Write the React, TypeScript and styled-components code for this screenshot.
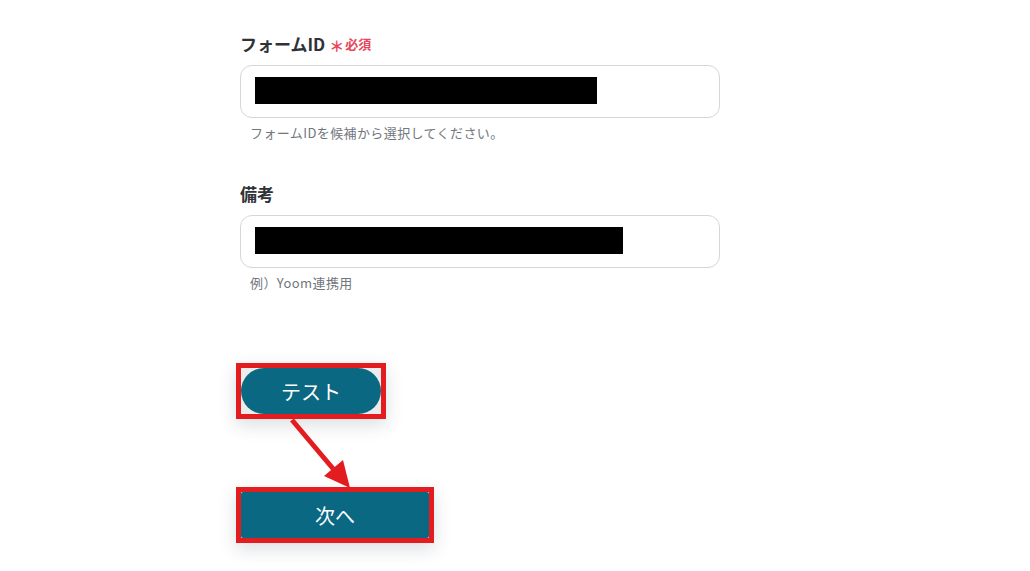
import * as React from 'react';
import styled, { createGlobalStyle } from 'styled-components';

const GlobalStyle = createGlobalStyle`
  html, body {
    margin: 0;
    padding: 0;
    background: #ffffff;
  }
  body {
    font-family: "Noto Sans CJK JP", "Noto Sans", sans-serif;
    color: #333333;
  }
`;

const Page = styled.div`
  width: 1030px;
  height: 571px;
  overflow: hidden;
  padding: 31px 0 0 240px;
  box-sizing: border-box;
`;

const Form = styled.div`
  width: 480px;
  display: flex;
  flex-direction: column;
`;

const Field = styled.div<{ $gap?: number }>`
  display: flex;
  flex-direction: column;
  margin-top: ${p => p.$gap ?? 0}px;
`;

const Label = styled.div`
  display: flex;
  align-items: center;
  height: 24px;
  font-size: 17px;
  font-weight: 700;
  color: #2f3237;
`;

const Asterisk = styled.span`
  margin-left: 4px;
  font-size: 15px;
  font-weight: 700;
  color: #e8455b;
  position: relative;
  top: 2px;
`;

const Required = styled.span`
  margin-left: 1px;
  font-size: 13px;
  font-weight: 700;
  color: #e8455b;
`;

const InputBox = styled.div`
  margin-top: 10px;
  height: 53px;
  box-sizing: border-box;
  border: 1px solid #d3d6db;
  border-radius: 12px;
  padding: 11px 14px;
  background: #fff;
`;

const Redacted = styled.div<{ $w: number }>`
  width: ${p => p.$w}px;
  height: 27px;
  background: #000;
`;

const Help = styled.div`
  margin-top: 6px;
  padding-left: 10px;
  font-size: 13px;
  letter-spacing: 0.4px;
  line-height: 18px;
  color: #72767d;
`;

const Actions = styled.div`
  position: relative;
  margin-top: 71px;
  margin-left: -4px;
  display: flex;
  flex-direction: column;
  align-items: flex-start;
  gap: 68px;
`;

const Highlight = styled.div`
  border: 5px solid #e31d1f;
  box-shadow: 0 6px 18px rgba(40, 50, 70, 0.16);
  background: #ececec;
  line-height: 0;
`;

const Button = styled.button<{ $w: number; $round?: boolean }>`
  width: ${p => p.$w}px;
  height: 46px;
  border: none;
  border-radius: ${p => (p.$round ? '23px' : '2px')};
  background: #0b6882;
  color: #ffffff;
  font-family: "Noto Sans CJK JP", "Noto Sans", sans-serif;
  font-size: 20px;
  font-weight: 400;
  cursor: pointer;
  padding: 0;
`;

const Arrow = styled.svg`
  position: absolute;
  left: 0;
  top: 0;
  overflow: visible;
  pointer-events: none;
`;

export default function App() {
  return (
    <>
      <GlobalStyle />
      <Page>
        <Form>
          <Field>
            <Label>
              フォームID<Asterisk>＊</Asterisk><Required>必須</Required>
            </Label>
            <InputBox>
              <Redacted $w={342} />
            </InputBox>
            <Help>フォームIDを候補から選択してください。</Help>
          </Field>
          <Field $gap={39}>
            <Label>備考</Label>
            <InputBox>
              <Redacted $w={368} />
            </InputBox>
            <Help>例）Yoom連携用</Help>
          </Field>
        </Form>
        <Actions>
          <Highlight>
            <Button $w={140} $round>テスト</Button>
          </Highlight>
          <Highlight>
            <Button $w={188}>次へ</Button>
          </Highlight>
          <Arrow width="200" height="190">
            <line x1="56" y1="57" x2="99" y2="108" stroke="#e31d1f" strokeWidth="5" />
            <polygon points="114,125 107,97 88,113" fill="#e31d1f" />
          </Arrow>
        </Actions>
      </Page>
    </>
  );
}
